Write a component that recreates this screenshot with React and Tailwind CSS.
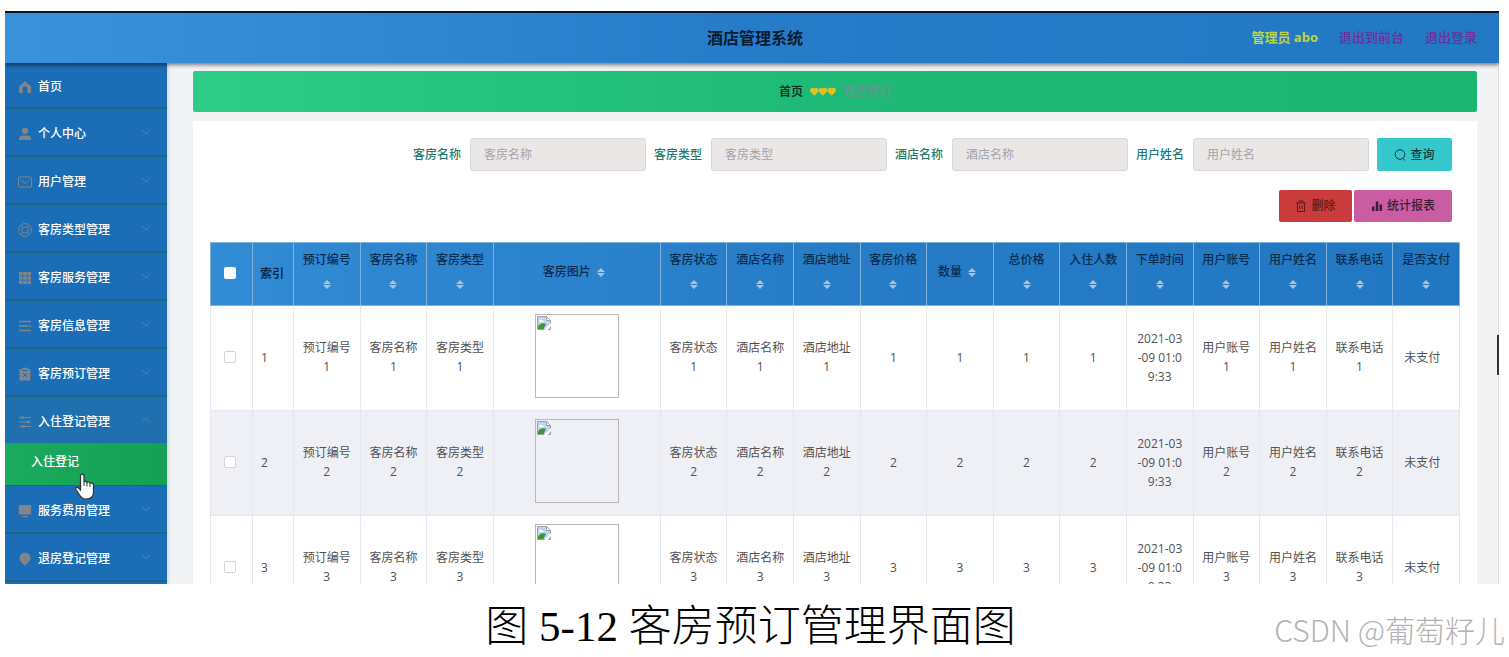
import React, { useState } from "react";

const menuItems = [
  { name: "首页", icon: "home", leaf: true },
  { name: "个人中心", icon: "user" },
  { name: "用户管理", icon: "mail" },
  { name: "客房类型管理", icon: "help" },
  { name: "客房服务管理", icon: "grid" },
  { name: "客房信息管理", icon: "list" },
  { name: "客房预订管理", icon: "order" },
  { name: "入住登记管理", icon: "sliders", children: ["入住登记"] },
  { name: "服务费用管理", icon: "monitor" },
  { name: "退房登记管理", icon: "location" },
];

const searchFields = ["客房名称", "客房类型", "酒店名称", "用户姓名"];

const columns = [
  "预订编号",
  "客房名称",
  "客房类型",
  "客房图片",
  "客房状态",
  "酒店名称",
  "酒店地址",
  "客房价格",
  "数量",
  "总价格",
  "入住人数",
  "下单时间",
  "用户账号",
  "用户姓名",
  "联系电话",
  "是否支付",
];

const numeric = ["客房价格", "数量", "总价格", "入住人数"];

const cellText = (col, n) => {
  if (numeric.includes(col)) return `${n}`;
  if (col === "下单时间") return "2021-03\n-09 01:0\n9:33";
  if (col === "是否支付") return "未支付";
  return `${col}\n${n}`;
};

const shapes = {
  home: <path fill="currentColor" d="M7 1 1 6.500V13h3.600V9a2.400 2.400 0 0 1 4.800 0v4H13V6.500z" />,
  user: (
    <g fill="currentColor">
      <circle cx="7" cy="4" r="3.200" />
      <path d="M1 13v-1.500C1 9.500 2.500 8.500 4.500 8.500h5c2 0 3.500 1 3.500 3V13z" />
    </g>
  ),
  mail: (
    <g fill="none" stroke="currentColor">
      <rect x=".5" y="2" width="13" height="10" rx="1" />
      <path d="m2.500 4.500 4.500 4 4.500-4" />
    </g>
  ),
  help: (
    <g fill="none" stroke="currentColor">
      <circle cx="7" cy="7" r="6.400" />
      <rect x="4" y="4" width="6" height="6" rx="2" />
      <path d="m2.500 2.500 2 2M11.500 2.500l-2 2M2.500 11.500l2-2M11.500 11.500l-2-2" />
    </g>
  ),
  grid: (
    <path
      fill="currentColor"
      d="M1 1h3.600v3.600H1zM5.200 1h3.600v3.600H5.200zM9.400 1H13v3.600H9.400zM1 5.200h3.600v3.600H1zM5.200 5.200h3.600v3.600H5.200zM9.400 5.200H13v3.600H9.400zM1 9.400h3.600V13H1zM5.200 9.400h3.600V13H5.200zM9.400 9.400H13V13H9.400z"
    />
  ),
  list: <path stroke="currentColor" strokeWidth="1.500" d="M1 2.500h12M1 7h9.500M11.500 7H13M1 11.500h12" />,
  order: (
    <g>
      <path fill="currentColor" d="M1.500 2H4V.800h6V2h2.500v11.500h-11z" />
      <path stroke="#1b6bb3" d="m5 6 4 4M9 6l-4 4M4.500 3.500h5" />
    </g>
  ),
  sliders: (
    <g stroke="currentColor" fill="none">
      <path d="M1 2.500h12M1 7h12M1 11.500h12" />
      <path strokeWidth="2.500" d="M3.500 2.500h2M9 7h2M4.500 11.500h2" />
    </g>
  ),
  monitor: <path fill="currentColor" d="M.800 1h12.400v9.500H.800zM4 12h6v1.300H4z" />,
  location: (
    <g>
      <path fill="currentColor" d="M7 .500a5.500 5.500 0 0 1 5.500 5.500c0 3-3.500 5.500-5.500 8-2-2.500-5.500-5-5.500-8A5.500 5.500 0 0 1 7 .500z" />
      <circle cx="7" cy="6" r="1.200" fill="#6d8296" />
    </g>
  ),
};

function MenuIcon({ name }) {
  return (
    <svg viewBox="0 0 14 14" className="w-[14px] h-[14px] shrink-0 text-[#7f858b]">
      {shapes[name]}
    </svg>
  );
}

function Chevron({ open }) {
  return (
    <svg viewBox="0 0 10 10" className="w-[10px] h-[10px] mb-1 text-[#4a82ae]" fill="none" stroke="currentColor">
      <path d={open ? "m1 7 4-4 4 4" : "m1 3 4 4 4-4"} />
    </svg>
  );
}

function Sidebar() {
  const [opened, setOpened] = useState("入住登记管理");

  return (
    <nav className="relative w-[162px] shrink-0 overflow-hidden bg-[#1b6db6] text-xs font-medium text-white shadow-[1px_0_4px_rgba(0,0,0,0.15)]">
      {menuItems.map((item) => {
        const isOpen = opened === item.name && item.children;
        return (
          <div key={item.name}>
            <button
              type="button"
              onClick={() => setOpened(isOpen ? "" : item.name)}
              className={`w-full flex items-center pt-[3px] pl-[13px] pr-4 ${item.leaf ? "h-[46px]" : isOpen ? "h-[46px]" : "h-12"} ${
                isOpen ? "bg-[#2070b0]" : "border-b-2 border-[#1f6480]"
              }`}
            >
              <MenuIcon name={item.icon} />
              <span className="ml-[6px] flex-1 text-left">{item.name}</span>
              {!item.leaf && <Chevron open={isOpen} />}
            </button>
            {isOpen &&
              item.children.map((child) => (
                <a
                  key={child}
                  href="#"
                  className="flex items-center h-[43px] pb-1 pl-[26px] bg-linear-to-r from-[#1baa5f] to-[#14a054] border-b border-[#1f6480]"
                >
                  {child}
                </a>
              ))}
          </div>
        );
      })}
      {/* hand pointer */}
      <svg viewBox="0 0 20 28" className="absolute left-[70px] top-[410px] w-[20px] h-[28px]">
        <path
          d="M5.500 3c0-2.500 3.500-2.500 3.500 0v6c.5-1 2.700-.800 3 .500.600-1 2.600-.600 2.900.800.800-.700 3.600-.200 3.600 1.500V19c0 4-2.500 7-7.500 7-3.500 0-5-1.500-6.500-4L1 16.500c-.8-1.800 1-3 2.500-1.500l2 2z"
          fill="white"
          stroke="#333"
          strokeWidth="1.200"
        />
        <path d="M9 9v4M12 10v3.500M15 11v3" stroke="#333" />
      </svg>
    </nav>
  );
}

function Header() {
  return (
    <header className="relative z-10 flex items-center h-[52px] shrink-0 pr-[22px] border-t-2 border-[#06121d] bg-linear-to-r from-[#3a92dd] via-[#267cc8] to-[#2278c3] shadow-[0_2px_4px_rgba(0,0,0,0.5)]">
      <div className="flex-1"></div>
      <h1 className="pl-7 text-base font-bold text-[#081c33]">酒店管理系统</h1>
      <div className="flex-1 flex justify-end gap-[21px] text-[13px] font-medium">
        <span className="text-[#bcd545] font-bold">管理员 abo</span>
        <a href="#" className="text-[#65349c]">退出到前台</a>
        <a href="#" className="text-[#65349c]">退出登录</a>
      </div>
    </header>
  );
}

function Breadcrumb() {
  return (
    <div className="flex items-center justify-center gap-[7px] h-[41px] rounded-xs text-xs bg-linear-to-r from-[#2dcc87] via-[#1eb977] to-[#1cb673]">
      <a href="#" className="font-bold text-[#10362b]">首页</a>
      <svg viewBox="0 0 27 9" className="w-[26px] h-[9px]" fill="#e0c024">
        <path d="M4.500 9 .600 5C-.700 3 .500.500 2.500.500c1 0 1.600.300 2 .800.400-.500 1-.800 2-.800 2 0 3.200 2.500 1.900 4.500z" />
        <path d="M13.500 9 9.600 5C8.300 3 9.500.500 11.500.500c1 0 1.600.300 2 .800.400-.500 1-.800 2-.800 2 0 3.200 2.500 1.900 4.500z" />
        <path d="M22.500 9 18.600 5C17.300 3 18.500.500 20.500.500c1 0 1.600.300 2 .800.400-.500 1-.800 2-.800 2 0 3.200 2.500 1.900 4.500z" />
      </svg>
      <span className="font-medium text-[#5f9a90]">客房预订</span>
    </div>
  );
}

function SortCaret() {
  return (
    <span className="inline-flex w-5 h-5 items-center justify-center align-middle">
      <svg viewBox="0 0 8 9" className="w-2 h-[9px]" fill="#b4bfcc">
        <path d="M4 0 8 4H0zM0 5h8L4 9z" />
      </svg>
    </span>
  );
}

function RoomImage() {
  return (
    <div className="w-[84px] h-[84px] mx-auto border border-[#b8b8b8]">
      <svg viewBox="0 0 16 16" className="w-4 h-4">
        <path d="M1.500 1.500h9l4 4v9h-13z" fill="#c3d3f0" stroke="#9aa3ad" />
        <path d="M10.500 1.500v4h4z" fill="#fff" stroke="#9aa3ad" />
        <path d="M3 6.500c0-2 3-2.500 3.500-.8 1.500 0 1.500 1.300.5 1.300H3.500z" fill="#fff" />
        <path d="M2 14v-2.500c2-3 5-4 8-2.500L7.500 14z" fill="#3f9433" />
        <path d="m7.500 15.500 8-8v3l-4.500 5z" fill="#fff" />
      </svg>
    </div>
  );
}

function SearchForm() {
  const [values, setValues] = useState({});

  return (
    <form className="flex flex-col items-end gap-[19px] pr-2 text-xs" onSubmit={(e) => e.preventDefault()}>
      <div className="flex items-center gap-2">
        {searchFields.map((field) => (
          <label key={field} className="flex items-center gap-[9px] font-medium text-[#23786f]">
            {field}
            <input
              type="text"
              placeholder={field}
              value={values[field] || ""}
              onChange={(e) => setValues({ ...values, [field]: e.target.value })}
              className="w-44 h-[33px] px-[13px] rounded-[3px] border border-[#d6d8e0] bg-[#ebe7e7] font-normal text-[#606266] placeholder:text-[#a3a4ab] outline-none"
            />
          </label>
        ))}
        <button type="submit" className="flex items-center justify-center gap-1 w-[75px] h-[33px] rounded-xs bg-[#34c8cc] font-medium text-[#173c40]">
          <svg viewBox="0 0 12 12" className="w-3 h-3" fill="none" stroke="currentColor">
            <circle cx="6" cy="5.500" r="4.800" />
            <path d="m9 9.500 2 2" />
          </svg>
          查询
        </button>
      </div>
      <div className="flex gap-[2px]">
        <button type="button" className="flex items-center justify-center gap-1 w-[73px] h-8 rounded-xs bg-[#c93c3b] font-medium text-[#5a1c1c]">
          <svg viewBox="0 0 12 12" className="w-3 h-3" fill="none" stroke="currentColor">
            <path d="M1 3h10M4 3V1h4v2M2.500 3v8.500h7V3M4.800 5.500v3.500M7.200 5.500v3.500" />
          </svg>
          删除
        </button>
        <button type="button" className="flex items-center justify-center gap-1 w-[98px] h-8 rounded-xs bg-[#ca5ca4] font-medium text-[#3d1c33]">
          <svg viewBox="0 0 12 12" className="w-3 h-3" fill="currentColor">
            <path d="M1 6.500h2.500V11H1zM4.800 1.500h2.500V11H4.800zM8.500 4.500H11V11H8.500z" />
          </svg>
          统计报表
        </button>
      </div>
    </form>
  );
}

function BookingTable() {
  return (
    <table className="w-full mt-5 table-fixed border-collapse text-xs leading-[19px] text-[#505256]">
      <colgroup>
        <col className="w-[42px]" />
        <col className="w-[41px]" />
        {columns.map((col) => (
          <col key={col} className={col === "客房图片" ? "w-[167px]" : ""} />
        ))}
      </colgroup>
      <thead>
        <tr className="h-[63px] bg-linear-to-r from-[#328bd5] via-[#267cc7] to-[#2277c2] text-[#0c2c50]">
          <th className="border border-[#7fb3dd] pr-1 pb-[2px]">
            <input type="checkbox" aria-label="全选" className="block mx-auto w-3 h-3 appearance-none rounded-xs bg-white" />
          </th>
          <th className="border border-[#7fb3dd] font-bold text-left pl-[7px] pb-[2px]">索引</th>
          {columns.map((col) => (
            <th key={col} className="border border-[#7fb3dd] px-2 pt-0 pb-1 font-medium leading-6">
              {col}
              <SortCaret />
            </th>
          ))}
        </tr>
      </thead>
      <tbody>
        {[1, 2, 3].map((n) => (
          <tr key={n} className={`h-[105px] ${n % 2 === 0 ? "bg-[#eff0f5]" : "bg-white"}`}>
            <td className="border border-[#e6e8ee] pr-1 pb-[2px]">
              <input
                type="checkbox"
                aria-label={`选择 ${n}`}
                className="block mx-auto w-3 h-3 appearance-none rounded-xs border border-[#d3d5da] bg-white"
              />
            </td>
            <td className="border border-[#e6e8ee] pl-2 pb-[2px]">{n}</td>
            {columns.map((col) =>
              col === "客房图片" ? (
                <td key={col} className="border border-[#e6e8ee] pb-[5px]">
                  <RoomImage />
                </td>
              ) : (
                <td
                  key={col}
                  className={`border border-[#e6e8ee] pb-[2px] text-center whitespace-pre ${col === "是否支付" ? "pr-2" : ""}`}
                >
                  {cellText(col, n)}
                </td>
              )
            )}
          </tr>
        ))}
      </tbody>
    </table>
  );
}

function App() {
  return (
    <div className="flex flex-col h-screen bg-white overflow-hidden font-['Open_Sans','Noto_Sans_CJK_SC',sans-serif]">
      <div className="relative flex flex-col flex-1 min-h-0 mt-[11px] ml-[5px] mr-[10px] overflow-hidden">
        <Header />
        <div className="flex flex-1 min-h-0">
          <Sidebar />
          <main className="flex-1 min-w-0 overflow-hidden pt-2 pl-[26px] pr-[21px] bg-[#f1f3f5] border-r border-[#dcdee0]">
            <Breadcrumb />
            <section className="mt-[9px] px-[17px] pt-[17px] bg-white">
              <SearchForm />
              <BookingTable />
            </section>
          </main>
        </div>
        <div className="absolute right-0 top-[324px] w-[2px] h-10 bg-[#333]"></div>
      </div>

      {/* Caption */}
      <footer className="relative flex items-center justify-center h-[73px] shrink-0 pt-3 pr-2">
        <p className="text-[43px] leading-none font-light text-black font-['Liberation_Serif','Noto_Sans_CJK_SC',serif]">
          图 5-12 客房预订管理界面图
        </p>
        <span className="absolute right-1 bottom-[10px] text-[30px] leading-9 font-light text-[#b4b4b4] font-['Noto_Sans_CJK_SC',sans-serif]">
          CSDN @葡萄籽儿
        </span>
      </footer>
    </div>
  );
}

export default App;
